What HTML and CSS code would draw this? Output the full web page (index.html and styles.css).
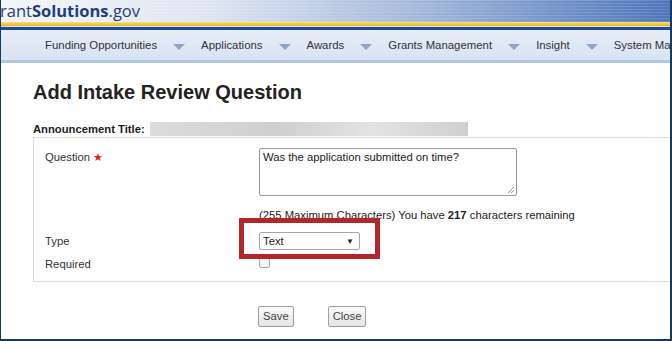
FILE: index.html
```html
<!doctype html>
<html>
    <head>
        <meta http-equiv="Content-Type" content="text/html; charset=utf-8">
        <link rel="stylesheet" href="styles.css">
    </head>
    <body>
        <div class="frame">
            <div class="brand">
                <span class="logo">rant<b>Solutions</b>.gov</span>
            </div>
            <div class="stripe"></div>
            <ul class="nav">
                <li>Funding Opportunities</li>
                <li class="arrow"><svg width="12" height="6" viewBox="0 0 12 6"><path d="M0 0H12L6 6Z" fill="#8fa6c6"/></svg></li>
                <li>Applications</li>
                <li class="arrow"><svg width="12" height="6" viewBox="0 0 12 6"><path d="M0 0H12L6 6Z" fill="#8fa6c6"/></svg></li>
                <li>Awards</li>
                <li class="arrow"><svg width="12" height="6" viewBox="0 0 12 6"><path d="M0 0H12L6 6Z" fill="#8fa6c6"/></svg></li>
                <li>Grants Management</li>
                <li class="arrow"><svg width="12" height="6" viewBox="0 0 12 6"><path d="M0 0H12L6 6Z" fill="#8fa6c6"/></svg></li>
                <li>Insight</li>
                <li class="arrow"><svg width="12" height="6" viewBox="0 0 12 6"><path d="M0 0H12L6 6Z" fill="#8fa6c6"/></svg></li>
                <li>System Ma</li>
            </ul>
            <div class="content">
                <h1>Add Intake Review Question</h1>
                <div class="announce">
                    <span class="announce-label">Announcement Title:</span>
                    <span class="blur"></span>
                </div>
                <div class="panel">
                    <div class="row">
                        <div class="label">Question <span class="star">&#9733;</span></div>
                        <div class="field">
                            <div class="textarea">Was the application submitted on time?
                                <svg class="grip" width="8" height="8" viewBox="0 0 8 8"><path d="M1 7L7 1M4 7L7 4" stroke="#999" stroke-width="1"/></svg>
                            </div>
                            <div class="count">(255 Maximum Characters) You have <b>217</b> characters remaining</div>
                        </div>
                    </div>
                    <div class="row type-row">
                        <div class="label">Type</div>
                        <div class="field">
                            <div class="select"><span>Text</span><span class="caret">&#9660;</span></div>
                        </div>
                    </div>
                    <div class="row req-row">
                        <div class="label">Required</div>
                        <div class="field"><span class="check"></span></div>
                    </div>
                    <div class="highlight"></div>
                </div>
                <div class="buttons">
                    <span class="btn">Save</span>
                    <span class="btn">Close</span>
                </div>
            </div>
        </div>
    </body>
</html>
```

FILE: styles.css
```css
body{
    margin: 0;
    font-family: "Liberation Sans", Arial, sans-serif;
    font-size: 11.25px;
    color: #222;
}
.frame{
    width: 672px;
    height: 341px;
    box-sizing: border-box;
    border-left: 1px solid #173a5c;
    border-right: 2px solid #173a5c;
    border-bottom: 2px solid #173a5c;
    overflow: hidden;
    background: #fff;
}
.brand{
    height: 22px;
    background:
        repeating-linear-gradient(to bottom, rgba(255,255,255,0.12) 0, rgba(255,255,255,0.12) 1px, rgba(0,0,0,0) 1px, rgba(0,0,0,0) 3px),
        linear-gradient(to right, #f3f5fa 0, #dfe6f2 30%, #a9bcdc 60%, #6f90c8 85%, #4f77ba 100%);
    overflow: hidden;
}
.logo{
    display: block;
    margin-left: -1px;
    font-family: "Open Sans", Verdana, sans-serif;
    font-size: 16.5px;
    line-height: 21px;
    color: #1d3f78;
}
.stripe{
    height: 8px;
    background: linear-gradient(to bottom, #f8e38c 0, #f1c83a 2px, #e9b923 4px, #d9e4f2 4px, #d9e4f2 5px, #1f4a93 5px, #1f4a93 8px);
}
.nav{
    display: flex;
    align-items: center;
    gap: 16px;
    height: 30px;
    margin: 0;
    padding: 0 0 0 44px;
    list-style: none;
    background: linear-gradient(to bottom, #e6edf7, #d8e3f3);
    border-bottom: 3px solid #b2c6e4;
    white-space: nowrap;
    overflow: hidden;
    font-size: 11.4px;
    color: #333;
}
.nav .arrow{
    display: flex;
    align-items: center;
    padding-top: 3px;
}
.content{
    padding-left: 32px;
}
h1{
    margin: 0;
    padding-top: 17px;
    font-size: 20px;
    line-height: 24px;
    font-weight: bold;
    color: #222;
}
.announce{
    display: flex;
    align-items: center;
    margin-top: 17px;
    height: 16px;
    font-weight: bold;
}
.blur{
    display: block;
    margin-left: 5px;
    width: 318px;
    height: 14px;
    background: linear-gradient(to right, #dcdcdc, #cfcfcf 40%, #e3e3e3 70%, #cfcfcf);
}
.panel{
    position: relative;
    border: 1px solid #dcdcdc;
    border-right: none;
    height: 145px;
    box-sizing: border-box;
    padding-top: 10px;
}
.row{
    display: flex;
}
.label{
    width: 214px;
    padding-left: 11px;
    color: #333;
    line-height: 16px;
}
.star{
    color: #e0201c;
    font-size: 11px;
}
.row .label:first-child{
    padding-top: 1px;
}
.textarea{
    position: relative;
    width: 258px;
    height: 48px;
    box-sizing: border-box;
    border: 1px solid #999;
    border-radius: 2px;
    padding: 1px 3px;
    line-height: 14px;
}
.grip{
    position: absolute;
    right: 1px;
    bottom: 1px;
}
.count{
    margin-top: 12px;
    line-height: 14px;
}
.type-row{
    margin-top: 10px;
}
.type-row .label{
    padding-top: 1px;
}
.select{
    display: flex;
    justify-content: space-between;
    align-items: center;
    width: 101px;
    height: 18px;
    box-sizing: border-box;
    border: 1px solid #a6a6a6;
    border-radius: 2px;
    padding: 0 5px 0 3px;
}
.caret{
    font-size: 8px;
}
.req-row{
    margin-top: 5px;
}
.check{
    display: block;
    width: 11px;
    height: 11px;
    margin-top: 2px;
    box-sizing: border-box;
    border: 1px solid #aaa;
    border-radius: 2px;
    background: #f4f4f4;
}
.highlight{
    position: absolute;
    left: 205px;
    top: 80px;
    width: 141px;
    height: 41px;
    box-sizing: border-box;
    border: 5px solid #b3262c;
}
.buttons{
    display: flex;
    gap: 34px;
    margin-top: 24px;
    padding-left: 225px;
}
.btn{
    display: block;
    height: 21px;
    box-sizing: border-box;
    padding: 0 4px;
    border: 1px solid #a0a0a0;
    border-radius: 2px;
    background: linear-gradient(to bottom, #fafafa, #e3e3e3);
    line-height: 19px;
    color: #444;
}
```
